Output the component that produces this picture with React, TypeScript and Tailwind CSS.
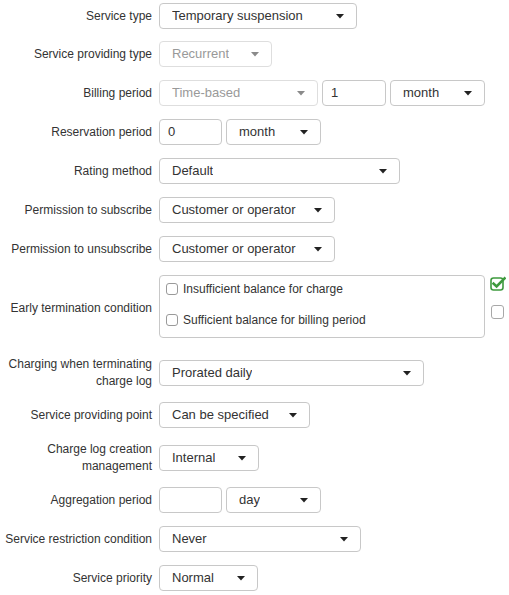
import React from 'react'

const font = { fontFamily: '"Liberation Sans", Arial, Helvetica, sans-serif' }

function Caret({ muted }: { muted?: boolean }) {
  return (
    <svg width="8" height="5" viewBox="0 0 8 5" className="shrink-0">
      <path d="M0 0 H8 L4 4.5 Z" fill={muted ? '#8a8a8a' : '#222'} />
    </svg>
  )
}

function Select({ value, w, muted }: { value: string; w: string; muted?: boolean }) {
  return (
    <div
      className={`${w} h-[26px] flex items-center justify-between pl-[12px] pr-[12px] rounded-[4px] border bg-white text-[13px] ${
        muted ? 'border-[#dedede] text-[#999]' : 'border-[#c8c8c8] text-[#333]'
      }`}
    >
      <span className="truncate">{value}</span>
      <Caret muted={muted} />
    </div>
  )
}

function Input({ value, w }: { value: string; w: string }) {
  return (
    <div className={`${w} h-[26px] flex items-center px-[8px] rounded-[4px] border border-[#c8c8c8] bg-white text-[13px] text-[#333]`}>
      {value}
    </div>
  )
}

function Row({ label, mt, children }: { label: React.ReactNode; mt: string; children: React.ReactNode }) {
  return (
    <div className={`flex items-center ${mt}`}>
      <div className="w-[152px] shrink-0 text-right text-[12px] leading-[17px] text-[#333]">{label}</div>
      <div className="ml-[7px] flex items-center gap-[4px]">{children}</div>
    </div>
  )
}

function Box({ checked }: { checked?: boolean }) {
  return (
    <span className="flex items-center gap-[6px] h-[20px]">
      <span
        className={`w-[12px] h-[12px] rounded-[3px] border bg-white ${checked ? 'border-[#3c9a3c]' : 'border-[#9a9a9a]'}`}
      />
    </span>
  )
}

function CheckSquare() {
  // square outline with a check that runs over its top corner
  return (
    <svg width="16" height="15" viewBox="0 0 16 15">
      <rect x="1" y="2" width="12" height="12" rx="2.5" fill="none" stroke="#3e9a3e" strokeWidth="1.6" />
      <path d="M3.6 7.6 L6.6 10.4 L14.6 2.4" fill="none" stroke="#3e9a3e" strokeWidth="2.6" strokeLinecap="square" />
    </svg>
  )
}

export default function App() {
  return (
    <div className="w-[509px] h-[595px] bg-white pt-[3px]" style={font}>
      <Row label="Service type" mt="mt-0">
        <Select value="Temporary suspension" w="w-[198px]" />
      </Row>
      <Row label="Service providing type" mt="mt-[12px]">
        <Select value="Recurrent" w="w-[113px]" muted />
      </Row>
      <Row label="Billing period" mt="mt-[13px]">
        <Select value="Time-based" w="w-[159px]" muted />
        <Input value="1" w="w-[64px]" />
        <Select value="month" w="w-[95px]" />
      </Row>
      <Row label="Reservation period" mt="mt-[13px]">
        <Input value="0" w="w-[63px]" />
        <Select value="month" w="w-[95px]" />
      </Row>
      <Row label="Rating method" mt="mt-[13px]">
        <Select value="Default" w="w-[241px]" />
      </Row>
      <Row label="Permission to subscribe" mt="mt-[13px]">
        <Select value="Customer or operator" w="w-[176px]" />
      </Row>
      <Row label="Permission to unsubscribe" mt="mt-[13px]">
        <Select value="Customer or operator" w="w-[176px]" />
      </Row>

      <div className="flex items-center mt-[13px]">
        <div className="w-[152px] shrink-0 text-right text-[12px] leading-[17px] text-[#333] pt-[4px]">
          Early termination condition
        </div>
        <div className="ml-[7px] w-[326px] h-[63px] rounded-[4px] border border-[#c8c8c8] bg-white pl-[6px] pt-[3px] flex flex-col gap-[11px] text-[12px] text-[#333]">
          <label className="flex items-center gap-[5px] h-[20px]">
            <Box />
            Insufficient balance for charge
          </label>
          <label className="flex items-center gap-[5px] h-[20px]">
            <Box />
            Sufficient balance for billing period
          </label>
        </div>
        <div className="self-start ml-[5px] flex flex-col gap-[14px] pt-[1px]">
          <CheckSquare />
          <span className="ml-[1px] w-[13px] h-[14px] rounded-[3px] border border-[#a8a8a8] bg-white" />
        </div>
      </div>

      <Row label={<>Charging when terminating<br />charge log</>} mt="mt-[18px]">
        <Select value="Prorated daily" w="w-[265px]" />
      </Row>
      <Row label="Service providing point" mt="mt-[12px]">
        <Select value="Can be specified" w="w-[151px]" />
      </Row>
      <Row label={<>Charge log creation<br />management</>} mt="mt-[13px]">
        <Select value="Internal" w="w-[100px]" />
      </Row>
      <Row label="Aggregation period" mt="mt-[12px]">
        <Input value="" w="w-[63px]" />
        <Select value="day" w="w-[95px]" />
      </Row>
      <Row label="Service restriction condition" mt="mt-[13px]">
        <Select value="Never" w="w-[202px]" />
      </Row>
      <Row label="Service priority" mt="mt-[13px]">
        <Select value="Normal" w="w-[99px]" />
      </Row>
    </div>
  )
}
